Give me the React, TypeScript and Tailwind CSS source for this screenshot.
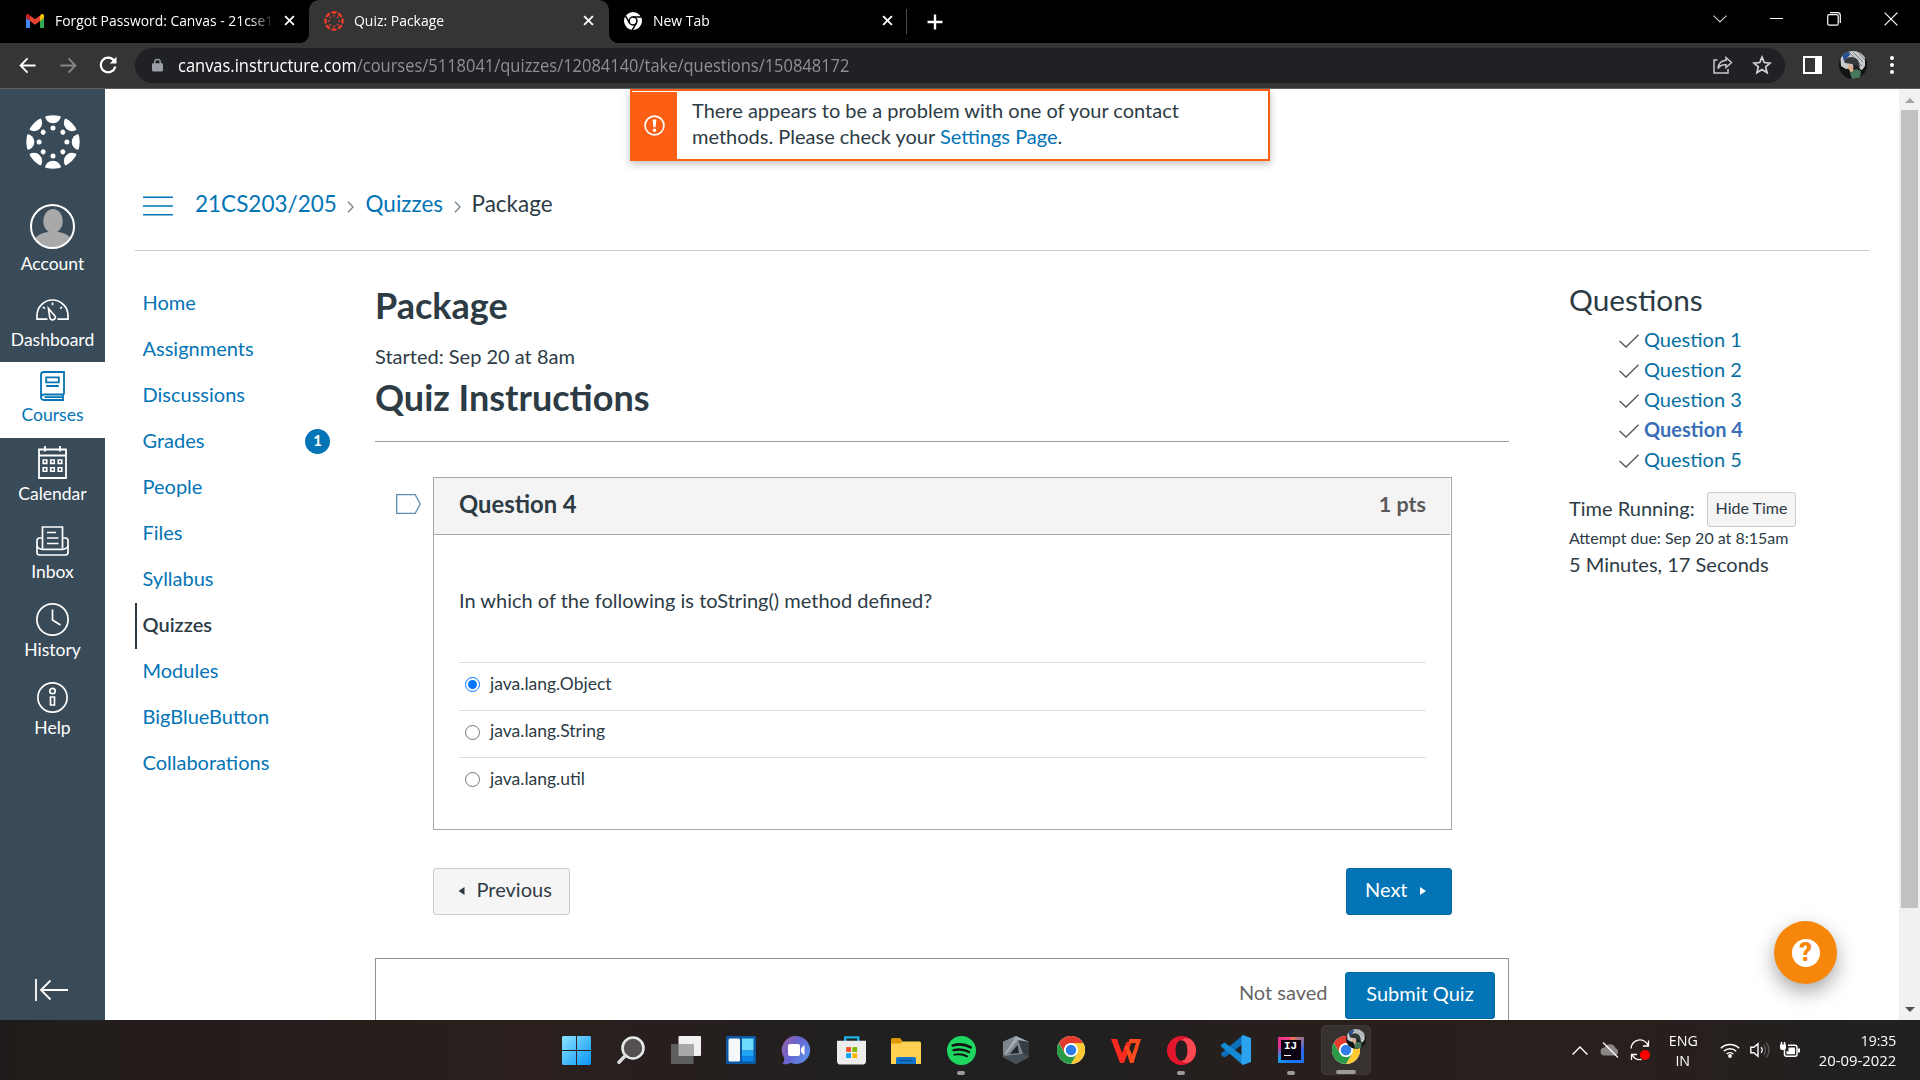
import type { ReactNode } from "react";

const SEGMENTS = [0, 45, 90, 135, 180, 225, 270, 315];

function CanvasLogo({ id, className }: { id: string; className: string }) {
  return (
    <svg viewBox="-27 -27 54 54" className={className} fill="currentColor">
      <clipPath id={id}>
        <circle r="26.7" />
      </clipPath>
      <g clipPath={`url(#${id})`}>
        {SEGMENTS.map((a) => (
          <circle key={a} cy="-26.8" r="8.1" transform={`rotate(${a})`} />
        ))}
      </g>
      {SEGMENTS.map((a) => (
        <circle key={a} cy="-13.9" r="2.5" transform={`rotate(${a})`} />
      ))}
    </svg>
  );
}

function Cross({ className }: { className: string }) {
  return (
    <svg viewBox="0 0 12 12" className={className} fill="none" stroke="currentColor" strokeWidth="2">
      <path d="M1.2 1.2l9.6 9.6M10.8 1.2L1.2 10.8" />
    </svg>
  );
}

function ChromeIcon({ className }: { className: string }) {
  return (
    <svg viewBox="0 0 48 48" className={className}>
      <circle cx="24" cy="24" r="24" fill="#fff" />
      <path d="M3.2 12A24 24 0 0 1 44.8 12H24a12 12 0 0 0-10.4 18z" fill="#e33b2e" />
      <path d="M44.8 12A24 24 0 0 1 24 48l10.4-18A12 12 0 0 0 24 12z" fill="#fcc934" />
      <path d="M24 48A24 24 0 0 1 3.2 12l10.4 18A12 12 0 0 0 34.4 30z" fill="#2a9a46" />
      <circle cx="24" cy="24" r="11.5" fill="#fff" />
      <circle cx="24" cy="24" r="9" fill="#2f7de9" />
    </svg>
  );
}

function ProfilePicture({ id, className }: { id: string; className: string }) {
  return (
    <svg viewBox="0 0 28 28" className={className}>
      <clipPath id={id}>
        <circle cx="14" cy="14" r="14" />
      </clipPath>
      <g clipPath={`url(#${id})`}>
        <rect width="28" height="28" fill="#101414" />
        <path d="M1 0h25v15l-3 4-8-2-8 1-5-3z" fill="#c9cccd" />
        <path d="M3 3l7-3 1 4-6 6z" fill="#274f93" />
        <path d="M14 1l10 10M18 0l8 9M11 2l12 13M22 1l4 5" stroke="#777c7e" strokeWidth="1" />
        <path d="M5 10c3-5 10-5 14-1l2 7-3 2-5-5-7-1z" fill="#33383a" />
        <path d="M8 13l5 1 2 6-3 2-3-5z" fill="#dcae92" />
        <path d="M14 14l5 1 3 4-4 4-3-3z" fill="#1d2223" />
        <path d="M11 22l6-4 5 2-1 7-8 1z" fill="#46775a" />
      </g>
    </svg>
  );
}

function TabStrip() {
  return (
    <div className="flex h-[43px] items-center bg-black text-white">
      <div className="flex h-full w-[309px] items-center pb-[2px] pl-[26px]">
        <svg viewBox="0 0 18 14" className="h-[14px] w-[18px]">
          <path d="M0 1.5V14h4V6z" fill="#4285f4" />
          <path d="M18 1.5V14h-4V6z" fill="#34a853" />
          <path d="M14 1.6V7l4-3V1.6C18 0 16.2-.4 15 .5z" fill="#fbbc04" />
          <path d="M0 1.6V4l4 3V1.6L3 .5C1.8-.4 0 0 0 1.6z" fill="#c5221f" />
          <path d="M4 1.4V7l5 3.8L14 7V1.4L9 5.2z" fill="#ea4335" />
        </svg>
        <div className="mb-[2px] ml-[11px] flex h-5 w-[222px] [mask-image:linear-gradient(90deg,#000_195px,transparent_219px)]">
          <span className="block origin-left scale-x-[0.925] whitespace-nowrap text-[15px] leading-5">
            Forgot Password: Canvas - 21cse1
          </span>
        </div>
        <Cross className="ml-[7px] size-[11px]" />
      </div>
      <div className="relative flex h-full w-[300px] items-center rounded-t-[10px] bg-[#353535] pb-[2px] pl-[15px]">
        <div className="absolute bottom-0 -left-[10px] size-[10px] bg-[radial-gradient(circle_at_0_0,transparent_10px,#353535_10.5px)]" />
        <div className="absolute -right-[10px] bottom-0 size-[10px] bg-[radial-gradient(circle_at_100%_0,transparent_10px,#353535_10.5px)]" />
        <CanvasLogo id="tab-logo" className="size-5 text-[#e63b2c]" />
        <span className="mb-[2px] ml-[10px] w-[226px] origin-left scale-x-[0.93] text-[15px] leading-5">Quiz: Package</span>
        <Cross className="ml-[3px] size-[11px]" />
      </div>
      <svg viewBox="0 0 48 48" className="mb-[2px] ml-[15px] size-[18px]">
        <circle cx="24" cy="24" r="24" fill="#fff" />
        <circle cx="24" cy="24" r="10.5" fill="none" stroke="#000" strokeWidth="4" />
        <path d="M24 13.500H46M14.900 29.500L4 10.500M33.100 29.500L22 48.500" stroke="#000" strokeWidth="4" />
      </svg>
      <span className="mb-[4px] ml-[11px] w-[229px] origin-left scale-x-[0.93] text-[15px] leading-5">New Tab</span>
      <Cross className="mb-[2px] size-[11px]" />
      <div className="ml-[13px] h-[25px] w-px bg-[#4c4c4c]" />
      <svg viewBox="0 0 16 16" className="ml-[20px] size-4" fill="none" stroke="#fff" strokeWidth="2.4">
        <path d="M8 .5v15M.5 8h15" />
      </svg>
      <div className="mb-[6px] ml-auto flex items-center pr-[22px]">
        <svg viewBox="0 0 14 8" className="h-2 w-[14px]" fill="none" stroke="#cfcfcf" strokeWidth="1.100">
          <path d="M.5.7L7 7 13.500.7" />
        </svg>
        <div className="ml-[43px] h-px w-[13px] bg-white" />
        <svg viewBox="0 0 14 14" className="ml-[44px] size-[14px]" fill="none" stroke="#fff" strokeWidth="1.200">
          <rect x=".7" y="2.700" width="10.500" height="10.500" rx="1.500" />
          <path d="M3 .7h7.500a2.800 2.800 0 0 1 2.800 2.800V11" />
        </svg>
        <svg viewBox="0 0 14 14" className="ml-[43px] size-[14px]" fill="none" stroke="#fff" strokeWidth="1.200">
          <path d="M.6.6l12.800 12.800M13.400.6L.6 13.400" />
        </svg>
      </div>
    </div>
  );
}

function Toolbar() {
  return (
    <div className="flex h-[46px] items-center border-b border-[#5e5e5e] bg-[#353535] pb-px">
      <svg viewBox="0 0 18 18" className="ml-[19px] size-[17px]" fill="none" stroke="#fff" strokeWidth="2">
        <path d="M17.500 9H2M9 1.500L1.700 9 9 16.500" />
      </svg>
      <svg viewBox="0 0 18 18" className="ml-[24px] size-[17px]" fill="none" stroke="#868686" strokeWidth="2">
        <path d="M.5 9H16M9 1.500L16.300 9 9 16.500" />
      </svg>
      <svg viewBox="0 0 18 18" className="ml-[22px] size-[18px]" fill="none" stroke="#fff" strokeWidth="2.200">
        <path d="M15 4.500A7.300 7.300 0 1 0 16.300 10.500" />
        <path d="M17.500.8V7.500H10.800z" fill="#fff" stroke="none" />
      </svg>
      <div className="ml-[18px] flex h-[35px] w-[1650px] items-center rounded-full bg-[#202124]">
        <svg viewBox="0 0 12 14" className="ml-[17px] h-[14px] w-[11px]">
          <rect y="5" width="12" height="9" rx="1.200" fill="#9aa0a6" />
          <path d="M3 6V3.800a3 3 0 0 1 6 0V6" fill="none" stroke="#9aa0a6" strokeWidth="1.500" />
        </svg>
        <span className="ml-[15px] w-[1400px] origin-left scale-x-[0.941] whitespace-nowrap text-[17.5px] leading-6 text-[#8e9093]">
          <span className="text-white">canvas.instructure.com</span>/courses/5118041/quizzes/12084140/take/questions/150848172
        </span>
        <svg viewBox="0 0 20 18" className="ml-auto h-[18px] w-[20px]" fill="none" stroke="#c7c8ca" strokeWidth="1.500">
          <path d="M4.500 4H1v13h14v-4" />
          <path d="M13 1.500L18.500 6.500 13 11.500V8.800C9.500 8.500 7 9.500 5 12.500 5.500 8 8.500 4.600 13 4.300z" />
        </svg>
        <svg viewBox="0 0 24 24" className="mr-[13px] ml-[19px] size-[20px]" fill="none" stroke="#d5d6d8" strokeWidth="2">
          <path d="M12 2.500l2.700 6.600 7.100.6-5.400 4.600 1.700 7L12 17.500l-6.100 3.800 1.700-7-5.400-4.600 7.100-.6z" />
        </svg>
      </div>
      <div className="ml-[18px] flex h-[18px] w-[19px] justify-end border-[2.5px] border-white">
        <div className="h-full w-[5px] bg-white" />
      </div>
      <ProfilePicture id="toolbar-profile" className="ml-[17px] size-[28px]" />
      <div className="ml-[23px] flex flex-col gap-[3px]">
        <div className="size-1 rounded-full bg-white" />
        <div className="size-1 rounded-full bg-white" />
        <div className="size-1 rounded-full bg-white" />
      </div>
    </div>
  );
}

function NavItem({ label, height, active, children }: { label: string; height: string; active?: boolean; children: ReactNode }) {
  return (
    <div
      className={`flex flex-col items-center justify-end ${height} ${active ? "bg-white text-[#0374b5]" : "text-white"}`}
    >
      {children}
      <span className="text-[17.5px] leading-6">{label}</span>
    </div>
  );
}

function GlobalNav() {
  return (
    <nav className="flex w-[105px] shrink-0 flex-col bg-[#394b58] text-white">
      <CanvasLogo id="nav-logo" className="mt-[26px] size-[54px] self-center" />
      <NavItem label="Account" height="h-[107px]">
        <svg viewBox="0 0 45 45" className="mb-[3px] size-[45px]">
          <clipPath id="account-avatar">
            <circle cx="22.500" cy="22.500" r="21" />
          </clipPath>
          <g clipPath="url(#account-avatar)" fill="#a9a9a9">
            <ellipse cx="23" cy="17" rx="9.800" ry="12" />
            <path d="M3 39c2-7 7-9.500 15-11h10c8 1.500 13 4 15 11v8H3z" />
          </g>
          <circle cx="22.500" cy="22.500" r="21.500" fill="none" stroke="#fff" strokeWidth="2" />
        </svg>
      </NavItem>
      <NavItem label="Dashboard" height="h-[76px]">
        <svg viewBox="0 0 33 22" className="mb-[7px] h-[22px] w-[33px]" fill="none" stroke="#fff" strokeWidth="1.700">
          <path d="M11.500 20.200H1V16.500a15.500 15.500 0 0 1 31 0v3.700H21.500" />
          <path d="M12.500 9.500l1.300 9.300a2.800 2.800 0 0 0 5.400-1.500z" />
          <path d="M16.500 3.500v2.700M7 8l1.800 1.600M26 8l-1.800 1.600" />
        </svg>
      </NavItem>
      <div className="h-[10px]" />
      <NavItem label="Courses" height="h-[65px]" active>
        <svg viewBox="0 0 25 30" className="mb-[2px] h-[30px] w-[25px]" fill="none" stroke="#0374b5" strokeWidth="1.800">
          <path d="M24 23.500V1H3.800A2.800 2.800 0 0 0 1 3.800V26.500A2.800 2.800 0 0 0 3.800 29H24M1 26.500a3 3 0 0 1 3-3h20M23 23.500V29M4.500 26.200H22" />
          <path d="M6.200 6.400h12.600v5H6.200zM6.200 15h12.600" />
        </svg>
      </NavItem>
      <div className="h-[11px] bg-white" />
      <NavItem label="Calendar" height="h-[68px]">
        <svg viewBox="0 0 29 33" className="mb-[3px] h-[33px] w-[29px]" fill="none" stroke="#fff" strokeWidth="1.800">
          <path d="M1 3.500h27V32H1zM1 9.500h27M7 0v5.500M22 0v5.500" />
          <path
            d="M5.200 14h3.600v3.400H5.200zM12.700 14h3.600v3.400h-3.600zM20.200 14h3.600v3.400h-3.600zM5.200 21.800h3.600v3.400H5.200zM12.700 21.800h3.600v3.400h-3.600zM20.200 21.800h3.600v3.400h-3.600z"
            strokeWidth="1.600"
          />
        </svg>
      </NavItem>
      <NavItem label="Inbox" height="h-[78px]">
        <svg viewBox="0 0 33 30" className="mb-[4px] h-[30px] w-[33px]" fill="none" stroke="#fff" strokeWidth="1.700">
          <path d="M6.500 22.500V1h20v21.500M6.500 12H3.500A2.600 2.600 0 0 0 1 14.500V26.500A2.600 2.600 0 0 0 3.500 29h26a2.600 2.600 0 0 0 2.500-2.500V14.500A2.600 2.600 0 0 0 29.500 12h-3" />
          <path d="M1 20c1 2.300 3 3.300 5.500 3.300h20c2.500 0 4.500-1 5.500-3.300M11 6.500h9M11 12h11.500M11 17.500h11.500" />
        </svg>
      </NavItem>
      <NavItem label="History" height="h-[78px]">
        <svg viewBox="0 0 33 33" className="mb-[2px] size-[33px]" fill="none" stroke="#fff" strokeWidth="1.700">
          <circle cx="16.500" cy="16.500" r="15.600" />
          <path d="M16.500 6.500v10.500l8 5" />
        </svg>
      </NavItem>
      <NavItem label="Help" height="h-[78px]">
        <svg viewBox="0 0 31 31" className="mb-[3px] size-[31px]" fill="none" stroke="#fff" strokeWidth="1.700">
          <circle cx="15.500" cy="15.500" r="14.600" />
          <circle cx="15.500" cy="9" r="2.700" />
          <path d="M13.500 15h4v8h-4z" />
        </svg>
      </NavItem>
      <svg viewBox="0 0 33 22" className="mt-auto mb-[19px] ml-[35px] h-[22px] w-[33px]" fill="none" stroke="#fff" strokeWidth="1.800">
        <path d="M1 0v22M33 11H6M15.500 1.500L6 11l9.500 9.500" />
      </svg>
    </nav>
  );
}

const COURSE_LINKS = [
  "Home",
  "Assignments",
  "Discussions",
  "Grades",
  "People",
  "Files",
  "Syllabus",
  "Quizzes",
  "Modules",
  "BigBlueButton",
  "Collaborations",
];

function CourseNav() {
  return (
    <ul className="mt-[30px] w-[195px] shrink-0">
      {COURSE_LINKS.map((label) => (
        <li
          key={label}
          className={`flex h-[46px] items-center justify-between border-l-2 pb-[5px] pl-[5.5px] text-xl ${
            label === "Quizzes" ? "border-[#2d3b45] font-semibold text-[#2d3b45]" : "border-transparent text-[#0374b5]"
          }`}
        >
          {label}
          {label === "Grades" && (
            <span className="mt-1 flex size-[25px] items-center justify-center rounded-full bg-[#0374b5] pb-0.5 text-[15px] font-bold text-white">
              1
            </span>
          )}
        </li>
      ))}
    </ul>
  );
}

function Chevron({ className }: { className: string }) {
  return (
    <svg viewBox="0 0 7 12" className={className} fill="none" stroke="#73818c" strokeWidth="1.300">
      <path d="M1 .7L6 6 1 11.300" />
    </svg>
  );
}

function Header() {
  return (
    <header className="flex h-[162px] items-start border-b border-[#c7cdd1] pt-[101px] text-[22.5px] leading-[27px]">
      <svg viewBox="0 0 31 20" className="mt-[6px] ml-[7.5px] h-5 w-[30px]" stroke="#0374b5" strokeWidth="1.700">
        <path d="M0 1h31M0 10h31M0 19h31" />
      </svg>
      <span className="ml-[22.5px] w-[142px] whitespace-nowrap text-[#0374b5]">21CS203/205</span>
      <Chevron className="mt-[11px] ml-[10px] h-3 w-[7px]" />
      <span className="ml-[11.5px] w-[77px] text-[#0374b5]">Quizzes</span>
      <Chevron className="mt-[11px] ml-[11.5px] h-3 w-[7px]" />
      <span className="ml-[10.5px]">Package</span>
    </header>
  );
}

const ANSWERS = ["java.lang.Object", "java.lang.String", "java.lang.util"];

function Quiz() {
  return (
    <main className="ml-[45px] w-[1134px] shrink-0">
      <h1 className="mt-[32px] text-[36px] leading-[44px] font-bold">Package</h1>
      <p className="mt-[16px] text-xl leading-[26px]">Started: Sep 20 at 8am</p>
      <h2 className="mt-[6px] text-[36px] leading-[44px] font-bold">Quiz Instructions</h2>
      <div className="mt-[22px] border-t border-[#9c9ea0]" />
      <div className="mt-[35px] flex pl-[21px]">
        <svg viewBox="0 0 25 20" className="mt-[17px] mr-[12px] h-[20px] w-[25px]" fill="none" stroke="#5f8eb0" strokeWidth="1.300">
          <path d="M.7.7h18.500L24.200 10l-5 9.300H.7z" />
        </svg>
        <div className="h-[353px] w-[1019px] border border-[#a5a8aa]">
          <div className="mr-px flex h-[57px] items-center justify-between border-b border-[#a5a8aa] bg-[#f4f4f4] pr-[24px] pb-[3px] pl-[25px] text-[23.8px] font-bold">
            <span>Question 4</span>
            <span className="text-[21.500px] text-[#595959]">1 pts</span>
          </div>
          <p className="mt-[52px] ml-[25px] text-xl leading-[26px]">In which of the following is toString() method defined?</p>
          <div className="mx-[25px] mt-[49px]">
            {ANSWERS.map((answer, i) => (
              <div key={answer} className="flex h-[47.500px] items-center border-t border-[#dddddd] pb-[5px] pl-[6px]">
                <div
                  className={`mt-[2px] flex size-[15px] items-center justify-center rounded-full border ${
                    i === 0 ? "border-[1.500px] border-[#0075ff]" : "border-[#767676]"
                  }`}
                >
                  {i === 0 && <div className="size-[9px] rounded-full bg-[#0075ff]" />}
                </div>
                <span className="ml-[10px] text-[17.500px]">{answer}</span>
              </div>
            ))}
          </div>
        </div>
      </div>
      <div className="mt-[38px] flex justify-between pr-[57px] pl-[58px] text-xl">
        <div className="flex h-[47px] w-[137px] items-center rounded-[3px] border border-[#c7cdd1] bg-[#f5f5f5] pb-[5px] pl-[24px]">
          <svg viewBox="0 0 6 8" className="mt-[4px] h-2 w-[7px]" fill="#2d3b45">
            <path d="M6 0v8L0 4z" />
          </svg>
          <span className="ml-[11.500px]">Previous</span>
        </div>
        <div className="flex h-[47px] w-[106px] items-center rounded-[3px] border border-[#0368a3] bg-[#0374b5] pb-[5px] pl-[18px] text-white">
          <span className="w-[42px]">Next</span>
          <svg viewBox="0 0 6 8" className="mt-[4px] ml-[12px] h-2 w-[8px]" fill="#fff">
            <path d="M0 0v8l6-4z" />
          </svg>
        </div>
      </div>
      <div className="mt-[43px] flex h-[80px] items-start justify-end border border-[#8f9192] pt-[13px] pr-[13px] text-xl">
        <span className="mt-[7px] mr-[17.500px] leading-[26px] text-[#666666]">Not saved</span>
        <div className="flex h-[47px] w-[150px] items-center justify-center rounded-[3px] border border-[#0368a3] bg-[#0374b5] pb-[5px] text-white">
          Submit Quiz
        </div>
      </div>
    </main>
  );
}

function QuestionList() {
  return (
    <aside className="ml-[60px] w-[300px] shrink-0">
      <h2 className="mt-[32px] text-[29.8px] leading-[34px]">Questions</h2>
      <ul className="mt-[7px] pl-[50px]">
        {[1, 2, 3, 4, 5].map((n) => (
          <li key={n} className="flex h-[30px] items-center text-xl">
            <svg viewBox="0 0 20 14" className="mt-[3px] h-[14px] w-[20px]" fill="none" stroke="#555" strokeWidth="1.300">
              <path d="M.6 7L7 13 19.500.7" />
            </svg>
            <span className={`ml-[5px] ${n === 4 ? "font-bold text-[#3a6fb8]" : "text-[#0770a3]"}`}>Question {n}</span>
          </li>
        ))}
      </ul>
      <div className="mt-[18px] flex items-center text-xl">
        <span className="w-[138px] pb-[4px]">Time Running:</span>
        <span className="flex h-[35px] w-[89px] items-center justify-center rounded-[3px] border border-[#c7cdd1] bg-[#f5f5f5] pb-[4px] text-base">
          Hide Time
        </span>
      </div>
      <p className="text-base leading-[22px]">Attempt due: Sep 20 at 8:15am</p>
      <p className="mt-[2px] text-xl leading-[26px]">5 Minutes, 17 Seconds</p>
    </aside>
  );
}

function Alert() {
  return (
    <div className="absolute top-0 left-[525px] flex h-[72px] w-[640px] border-2 border-[#fc5e13] bg-white shadow-[0_3px_8px_rgba(0,0,0,0.25)]">
      <div className="mt-px flex w-[45px] items-center justify-center bg-[#fc5e13]">
        <svg viewBox="0 0 20 20" className="mb-px size-[21px]" fill="none" stroke="#fff" strokeWidth="1.600">
          <circle cx="10" cy="10" r="9" />
          <path d="M8.200 4.200h3.600l-.8 7.500H9z" fill="#fff" stroke="none" />
          <circle cx="10" cy="14.500" r="1.600" fill="#fff" stroke="none" />
        </svg>
      </div>
      <p className="mt-[6px] ml-[15px] text-xl leading-[26px]">
        There appears to be a problem with one of your contact
        <br />
        methods. Please check your <span className="text-[#0374b5]">Settings Page</span>.
      </p>
    </div>
  );
}

function TaskIcon({ children, indicator }: { children: ReactNode; indicator?: "dot" | "bar" }) {
  return (
    <div
      className={`relative mr-[5px] flex size-[50px] items-center justify-center rounded-[5px] ${
        indicator === "bar" ? "border border-[#413b39] bg-[#37312f]" : ""
      }`}
    >
      {children}
      {indicator && (
        <div
          className={`absolute bottom-0 h-1 rounded-full bg-[#9d9b9a] ${indicator === "bar" ? "w-5" : "w-2"}`}
        />
      )}
    </div>
  );
}

function TaskbarIcons() {
  return (
    <div className="flex">
      <TaskIcon>
        <svg viewBox="0 0 30 30" className="size-[29px]">
          <defs>
            <linearGradient id="start" x1="0" y1="0" x2="1" y2="1">
              <stop offset="0" stopColor="#8be3ff" />
              <stop offset="1" stopColor="#0a95f8" />
            </linearGradient>
          </defs>
          <path d="M1 0h13.500v14.500H0V1zM15.500 0H29l1 1v13.500H15.500zM0 15.500h14.500V30H1l-1-1zM15.500 15.500H30V29l-1 1H15.500z" fill="url(#start)" />
        </svg>
      </TaskIcon>
      <TaskIcon>
        <svg viewBox="0 0 28 28" className="size-7">
          <circle cx="16" cy="12" r="10.500" fill="#555150" stroke="#e6e8ea" strokeWidth="2.600" />
          <path d="M8.500 19.500L2 26.200" stroke="#dcdfe1" strokeWidth="3.400" strokeLinecap="round" />
        </svg>
      </TaskIcon>
      <TaskIcon>
        <svg viewBox="0 0 30 28" className="h-7 w-[30px]">
          <rect x="7.500" width="22.500" height="20" rx="1" fill="#f1f1f1" />
          <rect y="8" width="22.500" height="20" rx="1" fill="#5f5f5f" />
          <path d="M7.500 8h15v12h-15z" fill="#a9a9a9" />
        </svg>
      </TaskIcon>
      <TaskIcon>
        <svg viewBox="0 0 30 28" className="h-7 w-[30px]">
          <rect width="30" height="28" rx="1.500" fill="#0b58a5" />
          <rect x="2.500" y="2.500" width="11.500" height="23" rx="1.500" fill="#f5f8fb" />
          <path d="M16 2.500h11.500v12H16z" fill="#6bdcff" />
          <path d="M16 15h11.500v5.500H16z" fill="#1ea5f5" />
          <path d="M16 20.500h11.500v5H16z" fill="#0a84e8" />
        </svg>
      </TaskIcon>
      <TaskIcon>
        <svg viewBox="0 0 30 29" className="h-[29px] w-[30px]">
          <defs>
            <linearGradient id="chat" x1="0" y1="0" x2="1" y2="0.6">
              <stop offset="0" stopColor="#9a629f" />
              <stop offset="0.500" stopColor="#6a63cf" />
              <stop offset="1" stopColor="#5b8be6" />
            </linearGradient>
          </defs>
          <path d="M15.500 0a14 14 0 1 1-6 26.800C7 28.300 4 28.700 1.500 28c1.500-2 2-4 1.500-6.500A14 14 0 0 1 15.500 0z" fill="url(#chat)" />
          <rect x="7" y="8" width="12" height="12" rx="2" fill="#fff" />
          <path d="M20 12.500l3.500-3.500v10.500L20 16z" fill="#fff" />
        </svg>
      </TaskIcon>
      <TaskIcon>
        <svg viewBox="0 0 30 30" className="size-[29px]">
          <path d="M8.500 6V1.500h13.500V6" fill="none" stroke="#21b4e8" strokeWidth="2.400" />
          <path d="M0 5h30v20.500a4 4 0 0 1-4 4H4a4 4 0 0 1-4-4z" fill="#ededed" />
          <path d="M9.500 11.500h5v5h-5z" fill="#f25022" />
          <path d="M15.800 11.500h5v5h-5z" fill="#7fba00" />
          <path d="M9.500 17.800h5v5h-5z" fill="#00a4ef" />
          <path d="M15.800 17.800h5v5h-5z" fill="#ffb900" />
        </svg>
      </TaskIcon>
      <TaskIcon>
        <svg viewBox="0 0 30 27" className="mt-0.5 h-[27px] w-[30px]">
          <path d="M0 1.500Q0 0 1.500 0H9l3.500 4.500V9H0z" fill="#dc9805" />
          <path d="M0 5.500h9L12 3.500h16.500q1.500 0 1.500 1.500v21H0z" fill="#ffd052" />
          <path d="M5 26v-5q0-2 2-2h16q2 0 2 2v5z" fill="#1173c9" />
          <path d="M9 22.500h12" stroke="#094f92" strokeWidth="1.200" />
        </svg>
      </TaskIcon>
      <TaskIcon indicator="dot">
        <svg viewBox="0 0 30 30" className="size-[29px]">
          <circle cx="15" cy="15" r="15" fill="#1ed760" />
          <g fill="none" stroke="#121212" strokeLinecap="round">
            <path d="M6 9.800c6-1.700 13-1.200 18.500 2" strokeWidth="2.800" />
            <path d="M6.800 14.700c5.500-1.400 11-.9 16 1.900" strokeWidth="2.400" />
            <path d="M7.500 19.300c4.800-1 9-.7 13.300 1.700" strokeWidth="2" />
          </g>
        </svg>
      </TaskIcon>
      <TaskIcon>
        <svg viewBox="0 0 26 28" className="h-7 w-[26px]">
          <path d="M13 0l13 6v15l-13 7-13-7V6z" fill="#59616a" />
          <path d="M13 0l13 6-10-.5L2 20 0 6z" fill="#a3aab1" />
          <path d="M13 0L0 6v14z" fill="#7d858d" />
          <path d="M15 4l11 2v15l-6-3z" fill="#353c43" />
          <path d="M15 4L2 20l18-2z" fill="#7b838b" />
          <path d="M14.500 9L7 18l9-1z" fill="#1f2428" />
          <path d="M2 20l18-2 6 3-13 7-13-7z" fill="#474f57" />
        </svg>
      </TaskIcon>
      <TaskIcon>
        <ChromeIcon className="size-7" />
      </TaskIcon>
      <TaskIcon>
        <svg viewBox="0 0 30 24" className="mt-0.5 h-6 w-[30px]">
          <path d="M0 0h6l5 14 4.500-11h5L13 24H9z" fill="#fb2a20" />
          <path d="M13.500 7l3.500-.5 4 9L25 4l-8 .5L18.500 0H30l-7.500 24H19z" fill="#fb4a1c" />
        </svg>
      </TaskIcon>
      <TaskIcon indicator="dot">
        <svg viewBox="0 0 29 29" className="size-[29px]">
          <path d="M14.500 0a14.500 14.500 0 1 0 0 29 14.500 14.500 0 0 0 0-29zm0 4.200c4 0 6 4.600 6 10.300s-2 10.300-6 10.300-6-4.600-6-10.300 2-10.300 6-10.300z" fill="#e3152c" fillRule="evenodd" />
          <path d="M14.500 4.200C17 1.500 21 1.700 23.700 3.300a14.500 14.500 0 0 1 0 22.400c-2.700 1.600-6.700 1.800-9.200-.9 4 0 6-4.600 6-10.300s-2-10.300-6-10.300z" fill="#fb4a52" />
        </svg>
      </TaskIcon>
      <TaskIcon>
        <svg viewBox="0 0 30 30" className="size-[30px]">
          <path d="M22 0v9L3.500 22.500 0 20v-1.500z" fill="#0b70b8" />
          <path d="M3.500 7.500L22 21v9L0 11.500V10z" fill="#1489d4" />
          <path d="M22 0l8 3v24l-8 3-1.500-1V1z" fill="#2ba3ee" />
        </svg>
      </TaskIcon>
      <TaskIcon indicator="dot">
        <div className="flex size-[26px] items-center justify-center bg-[conic-gradient(from_0deg,#fc7a45,#2867e8_25%,#1478f0_50%,#1b9be8_65%,#e22c91_80%,#f5427a)]">
          <div className="size-5 bg-[#0c0511] pt-px pl-[3px] font-['Liberation_Mono'] text-[11px] leading-[11px] font-bold text-white">
            IJ
            <div className="mt-[3px] h-px w-[7px] bg-white" />
          </div>
        </div>
      </TaskIcon>
      <TaskIcon indicator="bar">
        <ChromeIcon className="size-7" />
        <ProfilePicture id="task-profile" className="absolute top-[3px] right-[4px] size-5" />
      </TaskIcon>
    </div>
  );
}

function Tray() {
  return (
    <div className="ml-auto flex items-center pr-[24px] text-white">
      <svg viewBox="0 0 16 9" className="h-[9px] w-[16px]" fill="none" stroke="#fff" strokeWidth="1.400">
        <path d="M.6 8.400L8 1l7.400 7.400" />
      </svg>
      <svg viewBox="0 0 20 16" className="ml-[12px] h-4 w-5">
        <path d="M4.500 13.500a4 4 0 0 1 0-8A6 6 0 0 1 15.500 6a4 4 0 0 1 0 7.500z" fill="#8a8786" />
        <path d="M3 .5L18 15.500" stroke="#fff" strokeWidth="1.300" />
      </svg>
      <svg viewBox="0 0 20 22" className="ml-[10px] h-[22px] w-5" fill="none" stroke="#fff" strokeWidth="1.300">
        <path d="M1 9.500a8.800 8.800 0 0 1 17-3M18.500 1.500v5.500H13M11.500 20.500a9 9 0 0 1-9.500-5M1.500 21v-5.500H7" />
        <circle cx="15" cy="16" r="5" fill="#f00" stroke="none" />
      </svg>
      <div className="ml-[12px] flex w-[42px] flex-col items-center text-[15px] leading-5">
        <span className="scale-x-[0.95]">ENG</span>
        <span className="scale-x-[0.95]">IN</span>
      </div>
      <svg viewBox="0 0 20 16" className="ml-[16px] h-4 w-5" fill="none" stroke="#fff" strokeWidth="1.500">
        <path d="M.8 6.300a13 13 0 0 1 18.400 0M3.800 9.200a8.800 8.800 0 0 1 12.400 0M6.700 12a4.700 4.700 0 0 1 6.600 0" />
        <circle cx="10" cy="14" r="1.900" fill="#fff" stroke="none" />
      </svg>
      <svg viewBox="0 0 20 18" className="ml-[10px] h-[18px] w-5" fill="none" stroke="#fff" strokeWidth="1.400">
        <path d="M.8 6.200v5.600h3L8 15.300V2.700L3.800 6.200zM11 6.200a4 4 0 0 1 0 5.600" />
        <path d="M13.500 3.800a7.500 7.500 0 0 1 0 10.400M16 1.400a11 11 0 0 1 0 15.200" stroke="#555" />
      </svg>
      <svg viewBox="0 0 20 16" className="ml-[10px] h-4 w-5" fill="none" stroke="#fff" strokeWidth="1.500">
        <path d="M8 3.200h7a2 2 0 0 1 2 2v7a2 2 0 0 1-2 2H6.500a2 2 0 0 1-2-2V8" />
        <path d="M0 2.500h6V6a2 2 0 0 1-2 2H2a2 2 0 0 1-2-2zM.8 0h1.500v3H.8zM3.800 0h1.500v3H3.800zM8.500 5.500h6.500v6.700H6.500V9.200h2zM18 6.500h2v4h-2z" fill="#fff" stroke="none" />
      </svg>
      <div className="flex w-[96px] flex-col items-end pb-px text-[15px] leading-5">
        <span className="origin-right scale-x-[0.93]">19:35</span>
        <span className="origin-right scale-x-[0.99]">20-09-2022</span>
      </div>
    </div>
  );
}

export default function App() {
  return (
    <div className="flex h-[1080px] w-[1920px] flex-col overflow-hidden bg-white font-['Open_Sans','Noto_Sans',sans-serif]">
      <TabStrip />
      <Toolbar />
      <div className="relative flex h-[931px] overflow-hidden font-['Lato',sans-serif] text-[#2d3b45]">
        <GlobalNav />
        <div className="relative w-[1794px] shrink-0 pr-[30px] pl-[30px]">
          <Header />
          <div className="flex">
            <CourseNav />
            <Quiz />
            <QuestionList />
          </div>
          <Alert />
          <div className="absolute top-[832px] left-[1669px] flex size-[63px] items-center justify-center rounded-full bg-[#f7870a] shadow-[0_8px_20px_rgba(0,0,0,0.35)]">
            <div className="flex size-[28px] items-center justify-center rounded-full bg-white font-['Roboto'] text-[25px] leading-7 font-black text-[#f7870a]">
              ?
            </div>
          </div>
        </div>
        <div className="flex w-[21px] flex-col items-center bg-[#f1f1f1]">
          <svg viewBox="0 0 10 5" className="mt-[9px] h-[5px] w-[10px]" fill="#a3a3a3">
            <path d="M0 5l5-5 5 5z" />
          </svg>
          <div className="mt-[7px] h-[798px] w-[17px] bg-[#c1c1c1]" />
          <svg viewBox="0 0 10 5" className="mt-auto mb-[8px] h-[5px] w-[10px]" fill="#505050">
            <path d="M0 0l5 5 5-5z" />
          </svg>
        </div>
      </div>
      <div className="flex h-[60px] items-center bg-[linear-gradient(90deg,#211c1b_0px,#2a1f1d_540px,#202020_900px,#202020_1060px,#281f1d_1300px,#291f1d_1640px,#202120_1860px)] pl-[551px]">
        <TaskbarIcons />
        <Tray />
      </div>
    </div>
  );
}
